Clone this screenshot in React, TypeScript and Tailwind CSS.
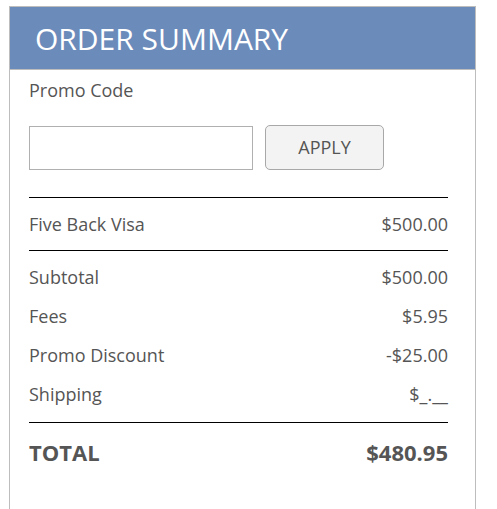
import React from "react";

const Row = ({ label, value }: { label: string; value: string }) => (
  <div className="flex h-[39px] items-center justify-between">
    <span>{label}</span>
    <span>{value}</span>
  </div>
);

export default function App() {
  return (
    <div
      className="h-[509px] w-[497px] bg-white pt-[6px] pl-[9px]"
      style={{ fontFamily: '"Open Sans", sans-serif' }}
    >
      <div className="h-[503px] w-[467px] border border-b-0 border-[#bdbdbd]">
        <div className="flex h-[63px] items-center border-b border-[#bdbdbd] bg-[#6b8bbb] pl-[25px] pt-[1px] text-[30px] text-white">
          ORDER SUMMARY
        </div>
        <div className="pl-[19px] pr-[27px] text-[18px] text-[#555]">
          <div className="flex h-[40px] items-center">Promo Code</div>
          <div className="mt-[15px] flex items-end gap-[12px]">
            <input
              className="h-[44px] w-[224px] border border-[#b0b0b0] bg-white outline-none"
              type="text"
            />
            <button className="h-[45px] w-[119px] rounded-[5px] border border-[#a8a8a8] bg-[#f3f3f3] text-[18px] text-[#555]">
              APPLY
            </button>
          </div>
          <div className="mt-[27px] border-t border-black" />
          <div className="flex h-[52px] items-center justify-between">
            <span>Five Back Visa</span>
            <span>$500.00</span>
          </div>
          <div className="border-t border-black" />
          <div className="pt-[7px] pb-[8px]">
            <Row label="Subtotal" value="$500.00" />
            <Row label="Fees" value="$5.95" />
            <Row label="Promo Discount" value="-$25.00" />
            <Row label="Shipping" value="$_.__" />
          </div>
          <div className="border-t border-black" />
          <div className="flex h-[58px] items-center justify-between pt-[1px] text-[22px] font-bold">
            <span>TOTAL</span>
            <span>$480.95</span>
          </div>
        </div>
      </div>
    </div>
  );
}
